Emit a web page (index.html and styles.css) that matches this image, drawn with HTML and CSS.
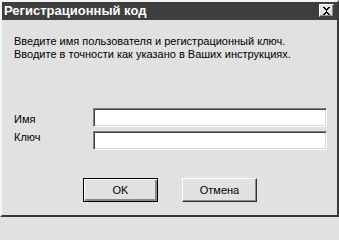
FILE: index.html
```html
<!DOCTYPE html>
<html lang="ru">
<head>
<meta charset="utf-8">
<title>Регистрационный код</title>
<link rel="stylesheet" href="styles.css">
</head>
<body>
<div class="window">
  <div class="titlebar">
    <span class="title">Регистрационный код</span>
    <button class="close" type="button" aria-label="Закрыть">
      <svg width="9" height="8" viewBox="0 0 9 8"><path d="M1 0h2v1h1v1h1V1h1V0h2v1H7v1H6v1H5v2h1v1h1v1h1v1H6V7H5V6H4v1H3v1H1V7h1V6h1V5h1V3H3V2H2V1H1z" fill="#000"/></svg>
    </button>
  </div>
  <div class="content">
    <p class="intro">Введите имя пользователя и регистрационный ключ.<br>Вводите в точности как указано в Ваших инструкциях.</p>
    <div class="form">
      <label class="lbl lbl-name" for="name">Имя</label>
      <input class="field" id="name" type="text">
      <label class="lbl lbl-key" for="key">Ключ</label>
      <input class="field" id="key" type="text">
    </div>
    <div class="buttons">
      <button class="btn btn-default" type="button">OK</button>
      <button class="btn" type="button">Отмена</button>
    </div>
  </div>
</div>
</body>
</html>
```
FILE: styles.css
```css
html, body {
  margin: 0;
  padding: 0;
  background: #e1e1e1;
}
.window {
  box-sizing: border-box;
  width: 339px;
  height: 217px;
  border: 2px solid;
  border-color: #f4f4f4 #3a3a3a #3a3a3a #f4f4f4;
  background: #e1e1e1;
  display: flex;
  flex-direction: column;
  font-family: "Liberation Sans", Arial, sans-serif;
  font-size: 11px;
  color: #000;
}
.titlebar {
  height: 18px;
  background: #3e3e3e;
  display: flex;
  align-items: flex-start;
  justify-content: space-between;
}
.title {
  color: #fff;
  font-weight: bold;
  font-size: 13px;
  line-height: 18px;
  padding-left: 2px;
}
.close {
  box-sizing: border-box;
  width: 15px;
  height: 13px;
  margin: 2px 3px 0 0;
  padding: 0;
  border: 1px solid;
  border-color: #fff #404040 #404040 #fff;
  box-shadow: inset -1px -1px #8a8a8a;
  background: #e1e1e1;
  display: flex;
  align-items: center;
  justify-content: center;
}
.close svg { display: block; }
.content {
  flex: 1;
  padding: 0 0 0 12px;
  display: flex;
  flex-direction: column;
}
.intro {
  margin: 15px 0 0 0;
  line-height: 13px;
}
.form {
  margin-top: 47px;
  display: grid;
  grid-template-columns: 79px 234px;
  row-gap: 4px;
}
.lbl {
  line-height: 13px;
}
.lbl-name { padding-top: 5px; }
.lbl-key { padding-top: 0; }
.field {
  box-sizing: border-box;
  height: 19px;
  width: 234px;
  margin: 0;
  border: 1px solid;
  border-color: #808080 #fff #fff #808080;
  box-shadow: inset 1px 1px #404040, inset -1px -1px #d8d8d8;
  background: #fff;
  outline: none;
}
.buttons {
  margin-top: 28px;
  padding-left: 69px;
  display: flex;
  gap: 24px;
}
.btn {
  box-sizing: border-box;
  width: 75px;
  height: 24px;
  margin: 0;
  padding: 0;
  border: 1px solid;
  border-color: #fff #303030 #303030 #fff;
  box-shadow: inset -1px -1px #8a8a8a;
  background: #e1e1e1;
  font-family: "Liberation Sans", Arial, sans-serif;
  font-size: 11px;
  color: #000;
}
.btn-default {
  border: 1px solid #000;
  box-shadow: inset 1px 1px #fff, inset -2px -2px #8a8a8a;
}
```
